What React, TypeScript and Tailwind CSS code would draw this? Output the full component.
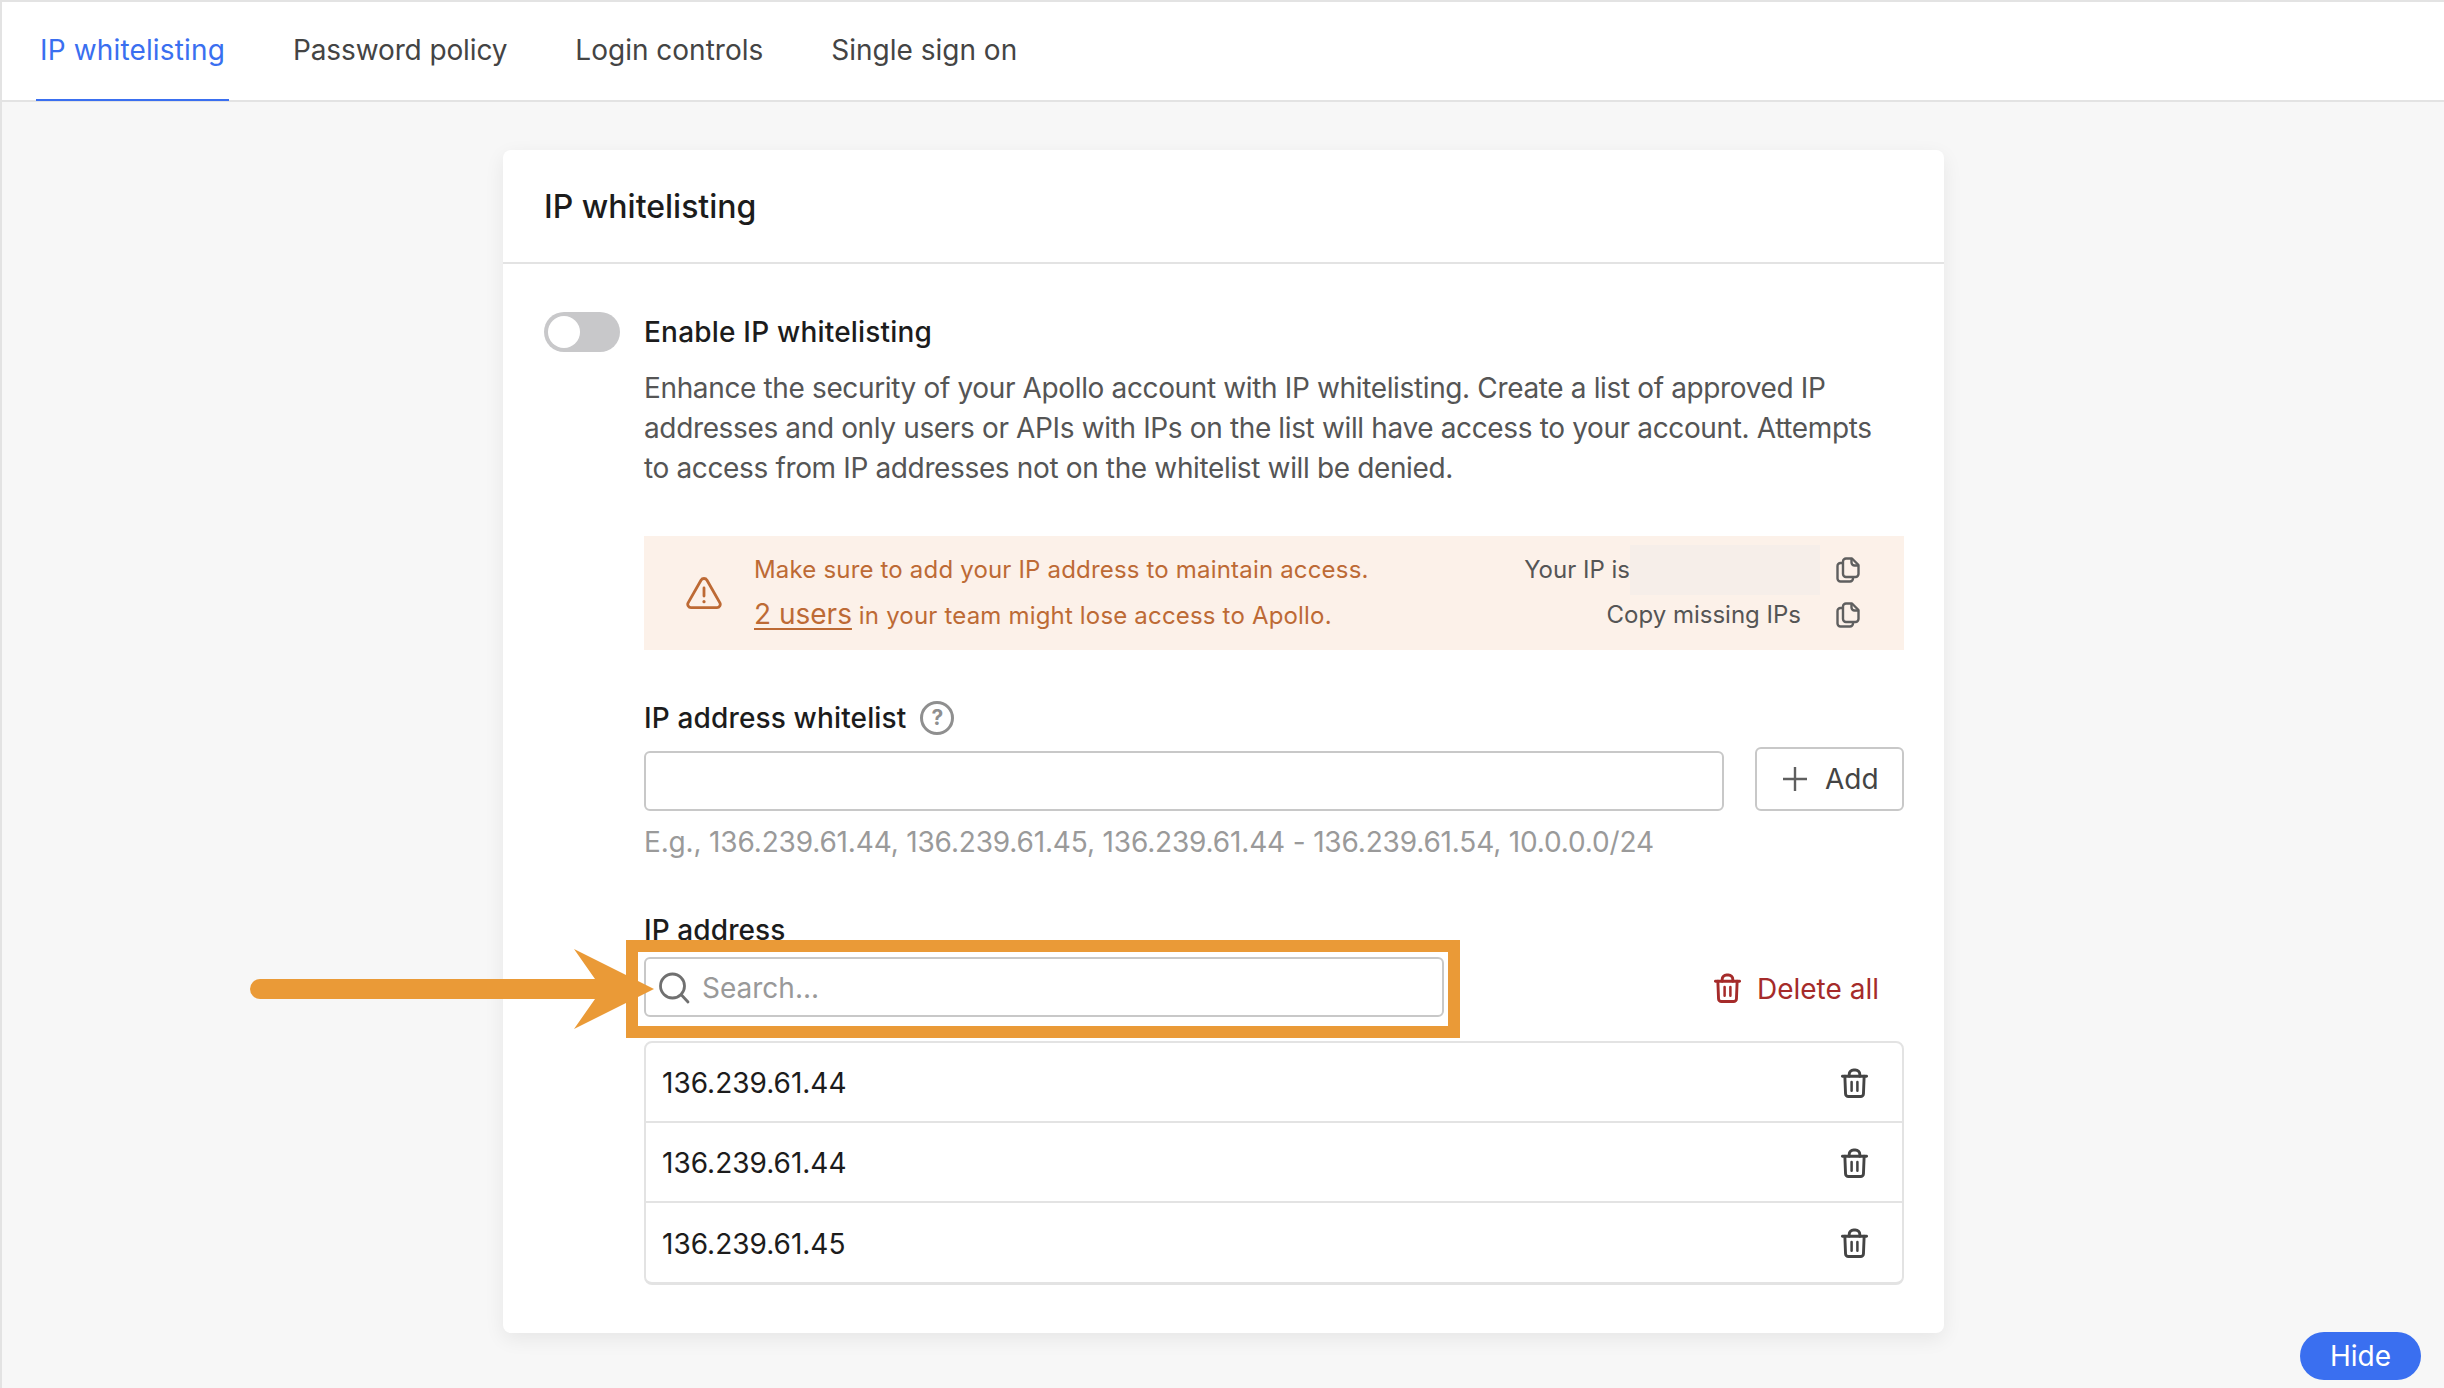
const TrashIcon = ({ className }: { className: string }) => (
  <svg viewBox="0 0 28 31" fill="none" stroke="currentColor" strokeWidth="3" strokeLinecap="round" strokeLinejoin="round" className={className}>
    <path d="M1.5 8H26.500" />
    <path d="M8.500 8V6a4.500 4.500 0 0 1 4.500-4.500h2A4.500 4.500 0 0 1 19.500 6v2" />
    <path d="M4 8l.7 18a3 3 0 0 0 3 3h12.600a3 3 0 0 0 3-3L24 8" />
    <path d="M11 14v9M17 14v9" strokeWidth="2.600" />
  </svg>
);

const CopyIcon = () => (
  <svg viewBox="0 0 24 26" fill="none" stroke="#5f5f5f" strokeWidth="2.4" strokeLinejoin="round" className="w-[24px] h-[26px] shrink-0">
    <path d="M10 1.5h6l6.5 6.5v9a3 3 0 0 1-3 3H10a3 3 0 0 1-3-3v-12.500a3 3 0 0 1 3-3z" />
    <path d="M15.500 1.500v4a3 3 0 0 0 3 3h4" />
    <path d="M7 6H4.500a3 3 0 0 0-3 3v12.500a3 3 0 0 0 3 3h9.500a3 3 0 0 0 3-3V20" />
  </svg>
);

const WarningIcon = () => (
  <svg viewBox="0 0 36 32" fill="none" stroke="#bd6a35" strokeWidth="2.8" strokeLinecap="round" className="w-[36px] h-[32px]">
    <path d="M15 3.200 2.100 25.800a3.300 3.300 0 0 0 2.900 4.800h26a3.300 3.300 0 0 0 2.900-4.800L21 3.200a3.500 3.500 0 0 0-6 0z" />
    <path d="M18 11v8" />
    <path d="M18 24.500v.2" strokeWidth="3.200" />
  </svg>
);

const tabs = ["Password policy", "Login controls", "Single sign on"];
const ips = ["136.239.61.44", "136.239.61.44", "136.239.61.45"];

export default function App() {
  return (
    <div className="relative h-screen overflow-hidden flex flex-col bg-[#f7f7f7] border-t-2 border-l-2 border-[#e3e3e3] font-['Inter',sans-serif] text-[28px] text-[#1c1c1c]">
      <div className="h-[100px] shrink-0 bg-white border-b-2 border-[#e3e3e3] flex items-stretch gap-[60px] pl-[34px]">
        <div className="relative px-[4px] flex items-center pb-[2px] text-[#3a6ff0] tracking-[0.15px]">
          IP whitelisting
          <div className="absolute left-0 right-0 -bottom-[1px] h-[2px] bg-[#3a6ff0]" />
        </div>
        {tabs.map((t, i) => (
          <div key={t} className={`px-[4px] flex items-center pb-[2px] text-[#444444] ${i === 0 ? "tracking-[-0.12px]" : ""}`}>{t}</div>
        ))}
      </div>

      <div className="flex justify-center pt-[48px]">
        <div className="ml-[1px] w-[1441px] bg-white rounded-[8px] shadow-[0_6px_20px_rgba(0,0,0,0.07)]">
          <div className="h-[114px] border-b-2 border-[#e3e3e3] flex items-center pl-[41px] pt-[2px] text-[32px] font-medium">
            IP whitelisting
          </div>
          <div className="flex gap-[24px] pl-[41px] pr-[40px] pt-[48px] pb-[48px]">
            <div className="w-[76px] h-[40px] shrink-0 rounded-full bg-[#c8c8ca] p-[4px]">
              <div className="w-[32px] h-[32px] rounded-full bg-white" />
            </div>
            <div className="w-[1260px]">
              <div className="h-[40px] leading-[40px] font-medium tracking-[0.2px]">Enable IP whitelisting</div>
              <p className="mt-[16px] leading-[40px] text-[#555555] tracking-[-0.36px]">
                Enhance the security of your Apollo account with IP whitelisting. Create a list of approved IP addresses and only users or APIs with IPs on the list will have access to your account. Attempts to access from IP addresses not on the whitelist will be denied.
              </p>

              <div className="mt-[48px] h-[114px] bg-[#fcf1e9] flex items-center pl-[42px] pr-[44px] text-[24px]">
                <WarningIcon />
                <div className="ml-[32px] flex-1 text-[#bd6a35] tracking-[0.18px] -mt-[2px]">
                  <div className="h-[45px] leading-[45px]">Make sure to add your IP address to maintain access.</div>
                  <div className="h-[45px] leading-[45px]">
                    <span className="text-[28px] underline underline-offset-[4px] tracking-normal">2 users</span> in your team might lose access to Apollo.
                  </div>
                </div>
                <div className="flex flex-col items-end text-[#555555] -mt-[2px]">
                  <div className="h-[45px] flex items-center">
                    <span>Your IP is</span>
                    <div className="w-[190px] h-[50px] bg-[#f6eee9]" />
                    <div className="ml-[16px]"><CopyIcon /></div>
                  </div>
                  <div className="h-[45px] flex items-center">
                    <span>Copy missing IPs</span>
                    <div className="ml-[35px]"><CopyIcon /></div>
                  </div>
                </div>
              </div>

              <div className="mt-[48px] h-[40px] flex items-center font-medium tracking-[0.15px]">
                IP address whitelist
                <span className="ml-[14px] w-[34px] h-[34px] rounded-full border-[3px] border-[#8f8f8f] text-[#8f8f8f] text-[21px] font-bold flex items-center justify-center">?</span>
              </div>
              <div className="mt-[9px] flex items-end gap-[31px]">
                <input className="w-[1080px] h-[60px] rounded-[6px] border-2 border-[#c8c8c8] bg-white outline-none" />
                <button className="w-[149px] h-[64px] rounded-[6px] border-2 border-[#c8c8c8] bg-white flex items-center pl-[26px] text-[#444444]">
                  <svg viewBox="0 0 24 24" fill="none" stroke="#5f5f5f" strokeWidth="2.400" className="w-[24px] h-[24px]">
                    <path d="M12 0v24M0 12h24" />
                  </svg>
                  <span className="ml-[18px]">Add</span>
                </button>
              </div>
              <div className="mt-[11px] h-[40px] leading-[40px] text-[#9a9a9a] tracking-[-0.16px]">
                E.g., 136.239.61.44, 136.239.61.45, 136.239.61.44 - 136.239.61.54, 10.0.0.0/24
              </div>

              <div className="mt-[48px] h-[40px] leading-[40px] font-medium tracking-[0.1px]">IP address</div>
              <div className="mt-[7px] flex items-center justify-between">
                <div className="w-[800px] h-[60px] rounded-[6px] border-2 border-[#c8c8c8] bg-white flex items-center pl-[12px] pt-[2px]">
                  <svg viewBox="0 0 32 32" fill="none" stroke="#707070" strokeWidth="2.800" strokeLinecap="round" className="w-[32px] h-[32px] shrink-0">
                    <circle cx="14.500" cy="14" r="12" />
                    <path d="M23.500 23 30 30" />
                  </svg>
                  <input placeholder="Search..." className="ml-[12px] flex-1 outline-none placeholder:text-[#999999]" />
                </div>
                <div className="flex items-center pr-[25px] pt-[3px] text-[#a52b2a]">
                  <TrashIcon className="w-[27px] h-[31px]" />
                  <span className="ml-[16px]">Delete all</span>
                </div>
              </div>

              <div className="mt-[24px] rounded-[8px] border-2 border-b-[3px] border-[#e3e3e3]">
                {ips.map((ip, i) => (
                  <div key={i} className={`flex items-center justify-between pl-[16px] pr-[34px] pt-[2px] ${i < 2 ? "h-[80px] border-b-2 border-[#e3e3e3]" : "h-[79px]"}`}>
                    <span>{ip}</span>
                    <TrashIcon className="w-[27px] h-[31px] text-[#444444]" />
                  </div>
                ))}
              </div>
            </div>
          </div>
        </div>
      </div>

      <div className="absolute left-[624px] top-[938px] w-[834px] h-[98px] border-[12px] border-[#ea9a37]" />
      <svg viewBox="0 0 404 80" className="absolute left-[248px] top-[947px] w-[404px] h-[80px]">
        <path d="M10 30H345L324 0L404 40L324 80L345 50H10A10 10 0 0 1 10 30Z" fill="#ea9a37" />
      </svg>

      <button className="absolute left-[2298px] top-[1330px] w-[121px] h-[48px] rounded-full bg-[#3a6ff0] text-white text-[28px]">Hide</button>
    </div>
  );
}
